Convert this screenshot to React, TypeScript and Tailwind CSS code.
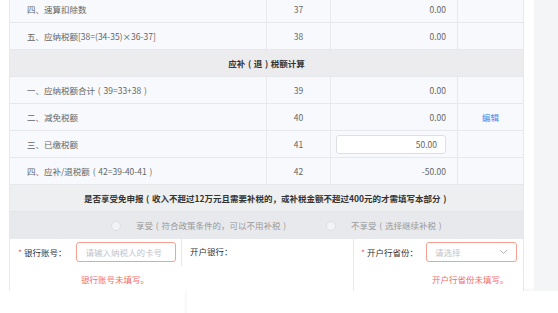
import React from "react";

const font = { fontFamily: '"Noto Sans CJK SC", "Noto Sans", sans-serif' };

function T({ s }: { s: string }) {
  const parts = s.split(/([（）])/);
  return (
    <>
      {parts.map((p, i) =>
        p === "（" || p === "）" ? (
          <span key={i} className="inline-block w-[1em] text-center">
            {p === "（" ? "(" : ")"}
          </span>
        ) : (
          <React.Fragment key={i}>{p}</React.Fragment>
        )
      )}
    </>
  );
}

function DataRow({ label, no, value, extra, input }: { label: string; no: string; value?: string; extra?: React.ReactNode; input?: string }) {
  return (
    <div className="grid grid-cols-[257px_64px_127px_65px] h-[27px] border-b border-[#e6e8ec] bg-[#f8f9fc] text-[#666]">
      <div className="flex items-center pl-[17px] border-r border-[#e6e8ec]"><span><T s={label} /></span></div>
      <div className="flex items-center justify-center border-r border-[#e6e8ec]">{no}</div>
      <div className="flex items-center justify-end pr-[11px] border-r border-[#e6e8ec]">
        {input !== undefined ? (
          <div className="w-[110px] h-[19px] bg-white border border-[#dcdfe6] rounded-[3px] flex items-center justify-end pr-[8px]">{input}</div>
        ) : (
          value
        )}
      </div>
      <div className="flex items-center justify-center">{extra}</div>
    </div>
  );
}

export default function App() {
  return (
    <div className="w-[558px] h-[313px] overflow-hidden bg-white text-[8.5px] leading-none" style={font}>
      <div className="flex h-[291px]">
        <div className="w-[10px]" />
        <div className="w-[513px] flex flex-col -mt-[4px] border-x border-[#e6e8ec] box-content -ml-px">
          <DataRow label="四、速算扣除数" no="37" value="0.00" />
          <DataRow label="五、应纳税额[38=(34-35)×36-37]" no="38" value="0.00" />
          <div className="h-[27px] border-b border-[#e6e8ec] bg-[#ececef] flex items-center justify-center font-bold text-[#333]">
            <span><T s="应补（退）税额计算" /></span>
          </div>
          <DataRow label="一、应纳税额合计（39=33+38）" no="39" value="0.00" />
          <DataRow label="二、减免税额" no="40" value="0.00" extra={<span className="text-[#4a86e8]">编辑</span>} />
          <DataRow label="三、已缴税额" no="41" input="50.00" />
          <DataRow label="四、应补/退税额（42=39-40-41）" no="42" value="-50.00" />
          <div className="h-[27px] border-b border-[#e3e5e9] bg-[#eeeff1] flex items-center justify-center font-bold text-[#333]">
            <span><T s="是否享受免申报（收入不超过12万元且需要补税的，或补税金额不超过400元的才需填写本部分）" /></span>
          </div>
          <div className="h-[27px] bg-[#e8e9ec] flex items-center text-[#999] pl-[101px]">
            <div className="flex items-center w-[215px]">
              <span className="w-[10px] h-[10px] rounded-full border border-[#dcdfe6] bg-[#f2f3f5]" />
              <span className="ml-[15px]"><T s="享受（符合政策条件的，可以不用补税）" /></span>
            </div>
            <div className="flex items-center">
              <span className="w-[10px] h-[10px] rounded-full border border-[#dcdfe6] bg-[#f2f3f5]" />
              <span className="ml-[15px]"><T s="不享受（选择继续补税）" /></span>
            </div>
          </div>
          <div className="flex flex-1 bg-white text-[#333]">
            <div className="w-[171px] flex flex-col pt-[3px]">
              <div className="flex items-center h-[20px]">
                <span className="ml-[8px] text-[#f56c6c]">*</span>
                <span className="ml-[2px]">银行账号：</span>
                <div className="ml-[9px] w-[100px] h-[20px] border border-[#f5a092] rounded-[3px] flex items-center pl-[9px] text-[#c0c4cc]">请输入纳税人的卡号</div>
              </div>
              <div className="ml-[71px] mt-[13px] text-[#f56c6c]">银行账号未填写。</div>
            </div>
            <div className="w-[172px]">
              <div className="h-[27px] border-l border-[#e6e8ec] flex items-center pl-[8px]">
                <span className="mt-[-3px]">开户银行：</span>
              </div>
            </div>
            <div className="flex-1 border-l border-[#e6e8ec] flex flex-col pt-[3px]">
              <div className="flex items-center h-[20px]">
                <span className="ml-[7px] text-[#f56c6c]">*</span>
                <span className="ml-[2px]">开户行省份：</span>
                <div className="ml-[8px] w-[91px] h-[20px] border border-[#f5a092] rounded-[3px] flex items-center justify-between pl-[8px] pr-[8px] text-[#c0c4cc]">
                  <span>请选择</span>
                  <svg width="9" height="6" viewBox="0 0 9 6" fill="none">
                    <path d="M1 1l3.5 3.5L8 1" stroke="#b0b3b8" strokeWidth="1" />
                  </svg>
                </div>
              </div>
              <div className="ml-[78px] mt-[13px] text-[#f56c6c]">开户行省份未填写。</div>
            </div>
          </div>
        </div>
        <div className="w-[10px]" />
        <div className="flex-1 bg-[#f4f5f7]" />
      </div>
      <div className="ml-[187px] h-[30px] bg-white shadow-[0_0_5px_rgba(0,0,0,0.08)]" />
    </div>
  );
}
